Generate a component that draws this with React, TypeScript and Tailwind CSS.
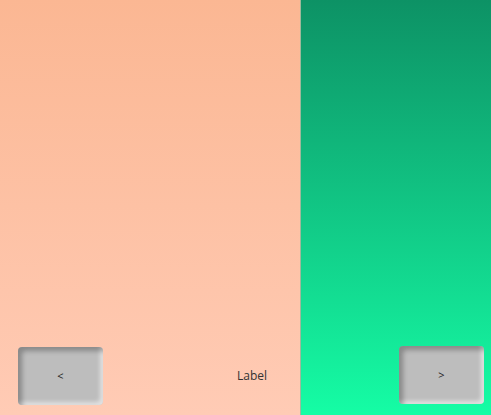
import React from 'react'

function NavButton({ children }: { children: React.ReactNode }) {
  return (
    <button
      className="flex h-[58px] w-[85px] items-center justify-center rounded-[4px] bg-[#bdbdbd] text-[11px] text-[#222] shadow-[inset_4px_4px_5px_rgba(0,0,0,0.28),inset_-3px_-3px_4px_rgba(255,255,255,0.55)]"
      style={{ fontFamily: '"Open Sans", "Noto Sans", sans-serif' }}
    >
      {children}
    </button>
  )
}

export default function App() {
  return (
    <div className="flex h-[415px] w-[491px] overflow-hidden" style={{ fontFamily: '"Open Sans", "Noto Sans", sans-serif' }}>
      <div className="flex w-[300px] flex-col justify-end bg-gradient-to-b from-[#fbb793] to-[#ffcbb5] pb-[10px]">
        <div className="flex items-center pl-[18px] pr-[33px]">
          <NavButton>&lt;</NavButton>
          <span className="ml-auto text-[12px] text-[#333]">Label</span>
        </div>
      </div>
      <div className="w-px bg-[#9fb89c]" />
      <div className="flex flex-1 flex-col items-end justify-end bg-gradient-to-b from-[#0d9265] to-[#15fda5] pb-[11px] pr-[7px]">
        <NavButton>&gt;</NavButton>
      </div>
    </div>
  )
}
